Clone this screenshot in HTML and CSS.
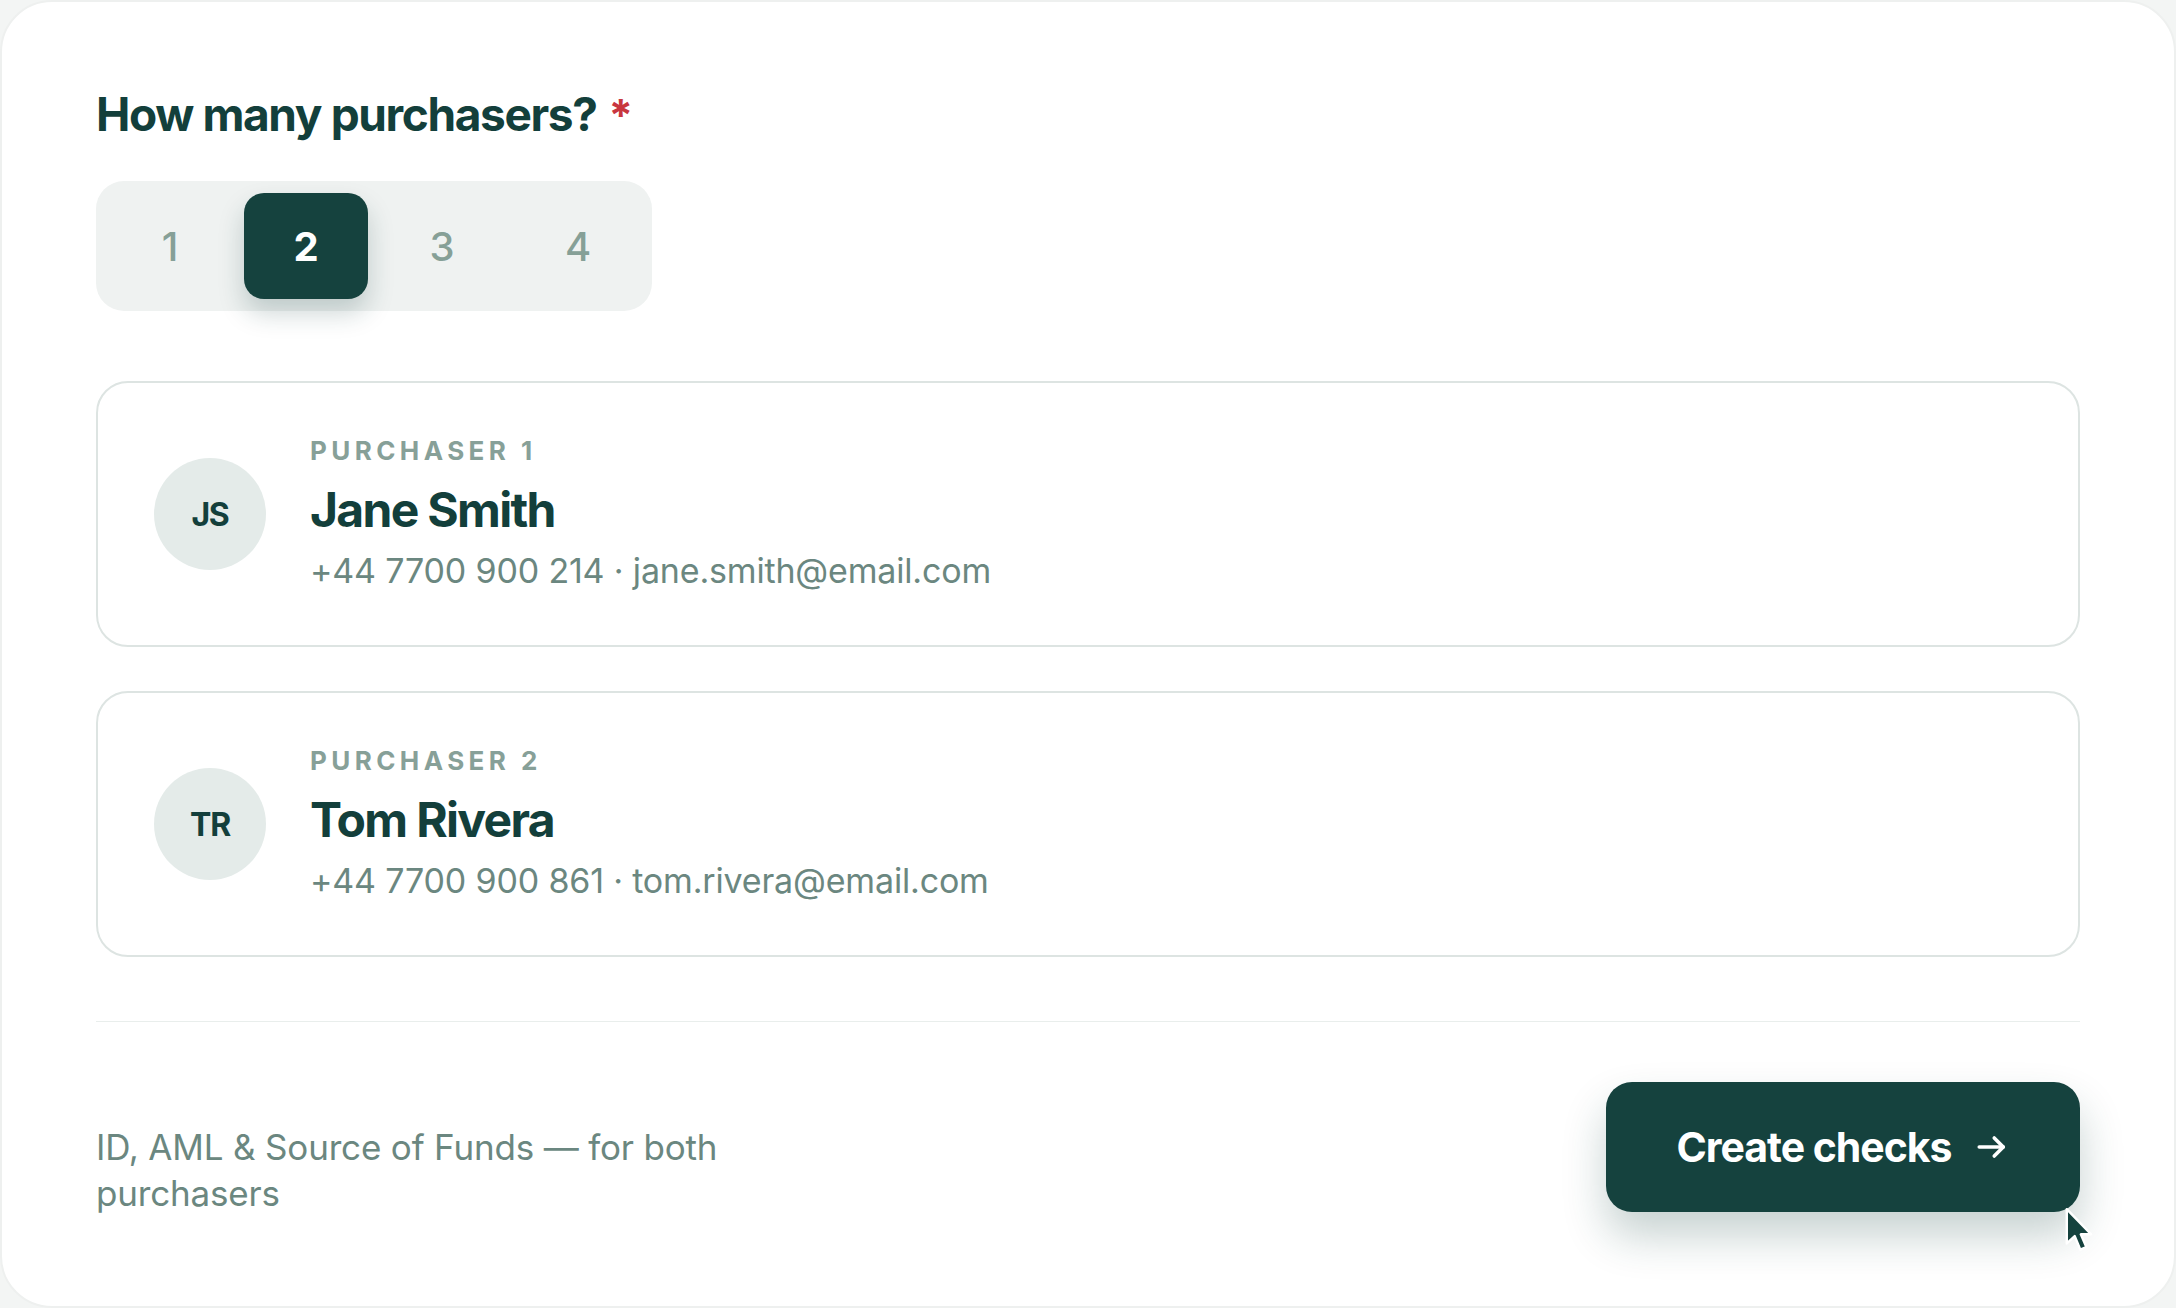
FILE: index.html
```html
<!DOCTYPE html>
<html lang="en">
<head>
<meta charset="utf-8">
<title>Purchasers</title>
<link rel="stylesheet" href="styles.css">
</head>
<body>
<main class="panel">
  <h1 class="question">How many purchasers?<span class="required">*</span></h1>

  <div class="count-picker">
    <button class="count-option">1</button>
    <button class="count-option is-selected">2</button>
    <button class="count-option">3</button>
    <button class="count-option">4</button>
  </div>

  <section class="purchasers">
    <article class="purchaser-card">
      <div class="avatar">JS</div>
      <div class="purchaser-info">
        <div class="purchaser-label">PURCHASER 1</div>
        <div class="purchaser-name">Jane Smith</div>
        <div class="purchaser-contact">+44 7700 900 214 · jane.smith@email.com</div>
      </div>
    </article>
    <article class="purchaser-card">
      <div class="avatar">TR</div>
      <div class="purchaser-info">
        <div class="purchaser-label">PURCHASER 2</div>
        <div class="purchaser-name">Tom Rivera</div>
        <div class="purchaser-contact">+44 7700 900 861 · tom.rivera@email.com</div>
      </div>
    </article>
  </section>

  <hr class="divider">

  <footer class="footer">
    <p class="footer-note">ID, AML &amp; Source of Funds — for both purchasers</p>
    <button class="primary-btn">
      <span>Create checks</span>
      <svg class="btn-arrow" viewBox="0 0 24 24" width="36" height="36" fill="none" stroke="currentColor" stroke-width="2.4" stroke-linecap="round" stroke-linejoin="round"><path d="M3.5 12h16"/><path d="M13.5 6l6 6-6 6"/></svg>
      <svg class="cursor" viewBox="0 0 24 36" width="30" height="44"><path d="M2 1 L2 29 L8.5 23 L13 34 L18 32 L13.5 21.5 L22 21.5 Z" fill="#15423e" stroke="#ffffff" stroke-width="2" stroke-linejoin="round"/></svg>
    </button>
  </footer>
</main>
</body>
</html>
```
FILE: styles.css
```css
* { box-sizing: border-box; }

html, body {
  margin: 0;
  padding: 0;
  background: #f3f5f4;
}

body {
  font-family: Inter, "Noto Sans", "Liberation Sans", sans-serif;
  color: #133f3b;
}

.panel {
  width: 2176px;
  height: 1308px;
  background: #ffffff;
  border: 2px solid #eef0ef;
  border-radius: 52px;
  padding: 84px 94px 94px;
  display: flex;
  flex-direction: column;
}

.question {
  margin: 0;
  font-size: 46px;
  line-height: 57px;
  font-weight: 700;
  letter-spacing: -0.03em;
  color: #133f3b;
}

.required {
  color: #c8373f;
  margin-left: 12px;
  font-size: 44px;
}

.count-picker {
  margin-top: 37px;
  align-self: flex-start;
  display: flex;
  gap: 12px;
  padding: 12px;
  background: #eff2f1;
  border-radius: 28px;
}

.count-option {
  width: 124px;
  height: 106px;
  border: none;
  border-radius: 20px;
  background: transparent;
  font-family: inherit;
  font-size: 40px;
  font-weight: 500;
  color: #86a097;
  cursor: pointer;
}

.count-option.is-selected {
  background: #15423e;
  color: #ffffff;
  font-weight: 700;
  box-shadow: 0 14px 26px rgba(21, 66, 62, 0.22);
}

.purchasers {
  margin-top: 70px;
  display: flex;
  flex-direction: column;
  gap: 44px;
}

.purchaser-card {
  height: 266px;
  border: 2px solid #dde4e2;
  border-radius: 32px;
  padding: 0 56px;
  display: flex;
  align-items: center;
  gap: 44px;
}

.avatar {
  width: 112px;
  height: 112px;
  border-radius: 50%;
  background: #e4ebe9;
  display: flex;
  align-items: center;
  justify-content: center;
  font-size: 32px;
  font-weight: 700;
  letter-spacing: -0.04em;
  color: #133f3b;
  flex-shrink: 0;
}

.purchaser-info {
  display: flex;
  flex-direction: column;
}

.purchaser-label {
  font-size: 26px;
  line-height: 36px;
  font-weight: 700;
  letter-spacing: 0.17em;
  color: #87a098;
  margin-bottom: 10px;
}

.purchaser-name {
  font-size: 48px;
  line-height: 62px;
  font-weight: 700;
  letter-spacing: -0.035em;
  color: #133f3b;
}

.purchaser-contact {
  margin-top: 6px;
  font-size: 34px;
  line-height: 48px;
  font-weight: 400;
  letter-spacing: -0.005em;
  color: #6b8780;
}

.divider {
  margin: 64px 0 0;
  height: 2px;
  border: none;
  background: #e9eeec;
}

.footer {
  margin-top: 60px;
  display: flex;
  justify-content: space-between;
  align-items: flex-end;
}

.footer-note {
  margin: 0;
  max-width: 720px;
  font-size: 35px;
  line-height: 46px;
  letter-spacing: -0.005em;
  color: #6b8780;
  transform: translateY(4px);
}

.primary-btn {
  position: relative;
  width: 474px;
  height: 130px;
  border: none;
  border-radius: 26px;
  background: #15423e;
  color: #ffffff;
  font-family: inherit;
  font-size: 41px;
  font-weight: 700;
  letter-spacing: -0.025em;
  display: flex;
  align-items: center;
  justify-content: center;
  gap: 22px;
  box-shadow: 0 24px 44px rgba(21, 66, 62, 0.24);
  cursor: pointer;
}

.btn-arrow {
  display: block;
}

.cursor {
  position: absolute;
  left: 458px;
  top: 126px;
}
```
